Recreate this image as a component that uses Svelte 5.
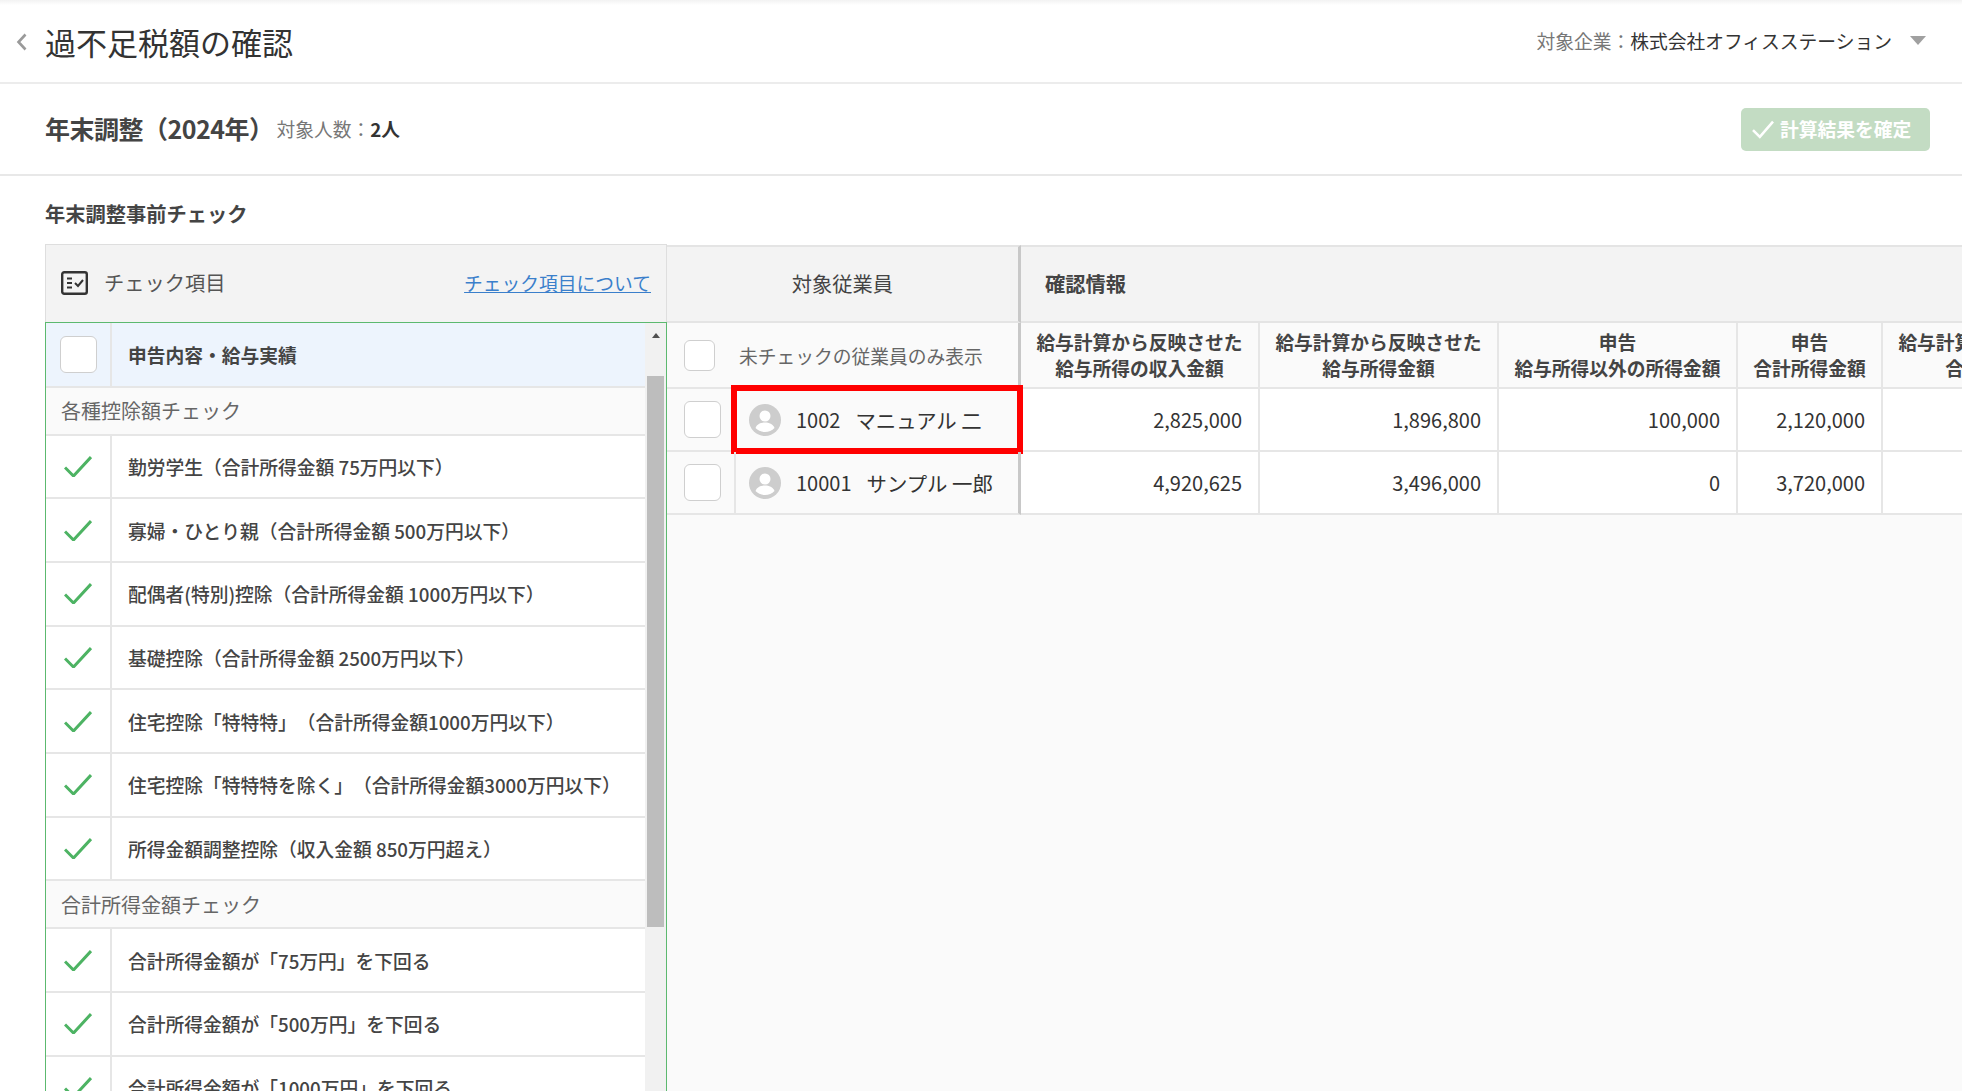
<script lang="ts">
	const groups = [
		{
			label: '各種控除額チェック',
			items: [
				'勤労学生（合計所得金額 75万円以下）',
				'寡婦・ひとり親（合計所得金額 500万円以下）',
				'配偶者(特別)控除（合計所得金額 1000万円以下）',
				'基礎控除（合計所得金額 2500万円以下）',
				'住宅控除「特特特」（合計所得金額1000万円以下）',
				'住宅控除「特特特を除く」（合計所得金額3000万円以下）',
				'所得金額調整控除（収入金額 850万円超え）'
			]
		},
		{
			label: '合計所得金額チェック',
			items: [
				'合計所得金額が「75万円」を下回る',
				'合計所得金額が「500万円」を下回る',
				'合計所得金額が「1000万円」を下回る'
			]
		}
	];

	const columns = [
		['給与計算から反映させた', '給与所得の収入金額'],
		['給与計算から反映させた', '給与所得金額'],
		['申告', '給与所得以外の所得金額'],
		['申告', '合計所得金額'],
		['給与計算から反映させた', '合計所得金額']
	];

	const employees = [
		{ code: '1002', name: 'マニュアル 二', values: ['2,825,000', '1,896,800', '100,000', '2,120,000', ''], marked: true },
		{ code: '10001', name: 'サンプル 一郎', values: ['4,920,625', '3,496,000', '0', '3,720,000', ''], marked: false }
	];
</script>

<div class="page">
	<div class="top-strip"></div>

	<header class="title-bar">
		<svg class="back" viewBox="0 0 11 18" width="11" height="18" aria-hidden="true">
			<path d="M9.500 1.500 2.500 9l7 7.500" fill="none" stroke="#9a9a9a" stroke-width="2.600" />
		</svg>
		<h1>過不足税額の確認</h1>
		<div class="company">
			<span class="muted">対象企業：</span><span>株式会社オフィスステーション</span>
			<span class="caret"></span>
		</div>
	</header>

	<div class="year-bar">
		<h2>年末調整（2024年）</h2>
		<div class="count"><span class="muted">対象人数：</span><b>2人</b></div>
		<button class="confirm" type="button" disabled>
			<svg viewBox="0 0 22 18" width="24" height="19" aria-hidden="true">
				<path d="M1.500 9.500 8 16 20.500 1.500" fill="none" stroke="#fff" stroke-width="2.400" />
			</svg>
			<span>計算結果を確定</span>
		</button>
	</div>

	<h3 class="section-title">年末調整事前チェック</h3>

	<main class="panels">
		<section class="checks">
			<div class="checks-head">
				<svg viewBox="0 0 27 24" width="27" height="24" aria-hidden="true">
					<rect x="1.200" y="1.200" width="24.600" height="21.600" rx="2" fill="none" stroke="#333" stroke-width="2.400" />
					<path d="M6 7.500h5M6 12h5M6 16.500h5" stroke="#333" stroke-width="2" />
					<path d="m14 12 3 3 5-6" fill="none" stroke="#333" stroke-width="2" />
				</svg>
				<span class="head-label">チェック項目</span>
				<span class="head-link">チェック項目について</span>
			</div>
			<div class="checks-body">
				<div class="checks-list">
					<div class="check-row current">
						<div class="check-cell"><span class="box"></span></div>
						<div class="check-text">申告内容・給与実績</div>
					</div>
					{#each groups as group}
						<div class="group-row">{group.label}</div>
						{#each group.items as item}
							<div class="check-row">
								<div class="check-cell">
									<svg viewBox="0 0 28 21" width="28" height="21" aria-hidden="true">
										<path d="M1 11.500 9.500 20 27 1" fill="none" stroke="#4db363" stroke-width="3" />
									</svg>
								</div>
								<div class="check-text">{item}</div>
							</div>
						{/each}
					{/each}
				</div>
				<div class="scrollbar">
					<span class="scroll-up"></span>
					<div class="scroll-thumb"></div>
				</div>
			</div>
		</section>

		<section class="results">
			<div class="result-grid">
				<div class="band band-employee">対象従業員</div>
				<div class="band band-info">確認情報</div>

				<div class="filter-cell">
					<span class="box small"></span>
					<span class="filter-label">未チェックの従業員のみ表示</span>
				</div>
				{#each columns as col}
					<div class="col-head">
						<span>{col[0]}</span>
						<span>{col[1]}</span>
					</div>
				{/each}

				{#each employees as emp}
					<div class="employee-cell" class:marked={emp.marked}>
						<div class="employee-check"><span class="box"></span></div>
						<div class="employee-name">
							<svg viewBox="0 0 32 32" width="32" height="32" aria-hidden="true">
								<circle cx="16" cy="16" r="16" fill="#cdcdcd" />
								<circle cx="16" cy="12" r="5.500" fill="#fff" />
								<path d="M6.500 24c1.500-4 5.500-5.500 9.500-5.500s8 1.500 9.500 5.500c-2.500 2.500-5.800 4-9.500 4s-7-1.500-9.500-4Z" fill="#fff" />
							</svg>
							<span class="emp-code">{emp.code}</span>
							<span class="emp-name">{emp.name}</span>
						</div>
					</div>
					{#each emp.values as value}
						<div class="num-cell">{value}</div>
					{/each}
				{/each}
			</div>
		</section>
	</main>
</div>

<style>
	:global(body) {
		margin: 0;
		background: #fff;
	}

	.page {
		display: flex;
		flex-direction: column;
		height: 100vh;
		overflow: hidden;
		font-family: "Noto Sans CJK JP", "Noto Sans", sans-serif;
		font-size: 18.75px;
		color: #333;
		text-spacing-trim: space-all;
	}

	.top-strip {
		height: 5px;
		flex: none;
		background: linear-gradient(#f2f2f2, #fff);
	}

	.muted {
		color: #777;
	}

	/* Title bar */
	.title-bar {
		flex: none;
		height: 79px;
		box-sizing: border-box;
		display: flex;
		align-items: center;
		padding: 0 36px 4px 16px;
		border-bottom: 2px solid #ececec;
	}

	.back {
		margin-right: 18px;
	}

	h1 {
		margin: 0;
		font-size: 31px;
		font-weight: 400;
		color: #333;
	}

	.company {
		margin-left: auto;
		margin-bottom: 2px;
		display: flex;
		align-items: center;
	}

	.caret {
		margin-left: 18px;
		border-left: 8px solid transparent;
		border-right: 8px solid transparent;
		border-top: 9px solid #a0a0a0;
	}

	/* Year bar */
	.year-bar {
		flex: none;
		height: 92px;
		box-sizing: border-box;
		display: flex;
		align-items: center;
		padding: 0 32px 2px 45px;
		border-bottom: 2px solid #e8e8e8;
	}

	h2 {
		margin: 0 3px 0 0;
		font-size: 25px;
		font-weight: 700;
		letter-spacing: -0.5px;
		color: #444;
	}

	.count b {
		font-weight: 700;
	}

	.confirm {
		margin-left: auto;
		margin-top: 2px;
		width: 189px;
		height: 43px;
		display: flex;
		align-items: center;
		gap: 5px;
		padding: 0 0 0 10px;
		border: none;
		border-radius: 5px;
		background: #c3dcc3;
		color: #fff;
		font: inherit;
		font-weight: 700;
	}

	.confirm span {
		margin-bottom: 2px;
	}

	.section-title {
		flex: none;
		margin: 0;
		padding: 23px 0 16px 45px;
		font-size: 20.250px;
		line-height: 29px;
		font-weight: 700;
		color: #444;
	}

	/* Panels */
	.panels {
		flex: 1;
		min-height: 0;
		display: flex;
		padding-left: 45px;
	}

	.checks {
		flex: none;
		width: 622px;
		display: flex;
		flex-direction: column;
	}

	.checks-head {
		flex: none;
		height: 78px;
		box-sizing: border-box;
		display: flex;
		align-items: center;
		padding: 0 15px 2px;
		background: #f3f3f3;
		border: 1px solid #dedede;
		border-bottom: none;
		font-size: 20.250px;
	}

	.head-label {
		margin-left: 16px;
		color: #555;
	}

	.head-link {
		margin-left: auto;
		color: #3a7fcb;
		text-decoration: underline;
		font-size: 18.750px;
	}

	.checks-body {
		flex: 1;
		min-height: 0;
		display: flex;
		border: 1px solid #5cb96f;
		border-bottom: none;
		overflow: hidden;
	}

	.checks-list {
		flex: 1;
		min-width: 0;
	}

	.check-row {
		height: 63.700px;
		box-sizing: border-box;
		display: flex;
		border-bottom: 2px solid #e6e6e6;
		background: #fff;
	}

	.check-row.current {
		height: 64.500px;
		background: #edf4fd;
	}

	.check-cell {
		flex: none;
		width: 66px;
		display: flex;
		align-items: center;
		justify-content: center;
		border-right: 2px solid #e6e6e6;
		box-sizing: border-box;
	}

	.check-text {
		display: flex;
		align-items: center;
		padding-left: 16px;
		font-size: 18.750px;
		font-weight: 500;
		color: #444;
		white-space: nowrap;
	}

	.current .check-text {
		font-weight: 700;
	}

	.group-row {
		height: 48px;
		box-sizing: border-box;
		display: flex;
		align-items: center;
		padding-left: 15px;
		background: #fafafa;
		border-bottom: 2px solid #e6e6e6;
		font-size: 20px;
		color: #666;
	}

	.box {
		display: block;
		width: 37px;
		height: 37px;
		box-sizing: border-box;
		background: #fff;
		border: 1.500px solid #cfcfcf;
		border-radius: 6px;
	}

	.box.small {
		width: 31px;
		height: 31px;
	}

	.scrollbar {
		flex: none;
		width: 21px;
		background: #f1f1f1;
		display: flex;
		flex-direction: column;
		align-items: center;
		padding-top: 10px;
		box-sizing: border-box;
	}

	.scroll-up {
		border-left: 4.500px solid transparent;
		border-right: 4.500px solid transparent;
		border-bottom: 5px solid #505050;
	}

	.scroll-thumb {
		margin-top: 38px;
		width: 17px;
		height: 551px;
		background: #bdbdbd;
	}

	/* Results table */
	.results {
		flex: 1;
		min-width: 0;
		padding-top: 1px;
		background: linear-gradient(#fff 1px, #fafafa 1px);
		overflow: hidden;
	}

	.result-grid {
		display: grid;
		grid-template-columns: 354px 239px 239px 239px 145px 239px;
		grid-template-rows: 78px 66px 63px 63px;
		width: max-content;
	}

	.band {
		display: flex;
		align-items: center;
		box-sizing: border-box;
		padding-bottom: 2px;
		background: #f3f3f3;
		border-top: 2px solid #e4e4e4;
		border-bottom: 2px solid #e4e4e4;
		font-size: 20.250px;
		color: #444;
	}

	.band-employee {
		justify-content: center;
		border-right: 3px solid #c8c8c8;
	}

	.band-info {
		grid-column: 2 / -1;
		padding-left: 24px;
		font-weight: 700;
	}

	.filter-cell {
		display: flex;
		align-items: center;
		box-sizing: border-box;
		padding-left: 17px;
		border-right: 3px solid #c8c8c8;
		border-bottom: 2px solid #e6e6e6;
	}

	.filter-label {
		margin-left: 24px;
		color: #666;
	}

	.col-head {
		box-sizing: border-box;
		display: flex;
		flex-direction: column;
		justify-content: center;
		align-items: center;
		white-space: nowrap;
		line-height: 26px;
		font-weight: 700;
		color: #444;
		background: #fafafa;
		border-right: 2px solid #e6e6e6;
		border-bottom: 2px solid #e6e6e6;
	}

	.employee-cell {
		position: relative;
		display: flex;
		box-sizing: border-box;
		border-right: 3px solid #c8c8c8;
		border-bottom: 2px solid #e6e6e6;
		font-size: 20px;
	}

	/* red annotation drawn over the row */
	.employee-cell.marked::after {
		content: "";
		position: absolute;
		left: 64px;
		right: -5px;
		top: -4px;
		bottom: -4px;
		border: 6px solid #ff0000;
	}

	.employee-check {
		flex: none;
		width: 69px;
		box-sizing: border-box;
		display: flex;
		align-items: center;
		padding-left: 17px;
		border-right: 2px solid #e6e6e6;
	}

	.employee-name {
		display: flex;
		align-items: center;
		padding-left: 13px;
		white-space: nowrap;
	}

	.emp-code {
		margin: 0 15px 0 15px;
	}

	.emp-name {
		font-size: 20.400px;
	}

	.num-cell {
		display: flex;
		align-items: center;
		justify-content: flex-end;
		box-sizing: border-box;
		padding-right: 16px;
		background: #fff;
		font-size: 20px;
		border-right: 2px solid #e6e6e6;
		border-bottom: 2px solid #e6e6e6;
	}
</style>
